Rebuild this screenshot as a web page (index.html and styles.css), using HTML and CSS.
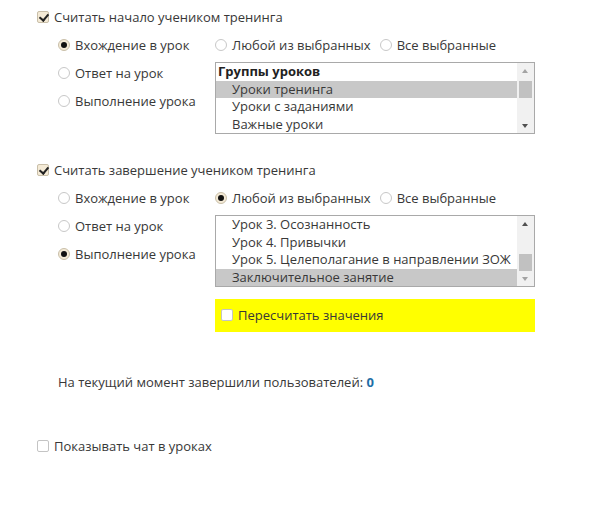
FILE: index.html
```html
<!DOCTYPE html>
<html lang="ru">
<head>
<meta charset="utf-8">
<title>Настройки тренинга</title>
<link rel="stylesheet" href="styles.css">
</head>
<body>
<div class="page">
  <section class="block">
    <label class="check-row"><span class="cb checked"></span>Считать начало учеником тренинга</label>
    <div class="opts">
      <div class="col-left">
        <label class="radio-row"><span class="rb on"></span>Вхождение в урок</label>
        <label class="radio-row"><span class="rb"></span>Ответ на урок</label>
        <label class="radio-row"><span class="rb"></span>Выполнение урока</label>
      </div>
      <div class="col-right">
        <div class="radio-inline">
          <label class="radio-row"><span class="rb"></span>Любой из выбранных</label>
          <label class="radio-row"><span class="rb"></span>Все выбранные</label>
        </div>
        <div class="listbox lb1">
          <div class="lb-items">
            <div class="lb-group">Группы уроков</div>
            <div class="lb-opt sel">Уроки тренинга</div>
            <div class="lb-opt">Уроки с заданиями</div>
            <div class="lb-opt">Важные уроки</div>
          </div>
          <div class="sbar">
            <span class="arr up"></span>
            <div class="track"><div class="thumb t1"></div></div>
            <span class="arr down"></span>
          </div>
        </div>
      </div>
    </div>
  </section>

  <section class="block b2">
    <label class="check-row"><span class="cb checked"></span>Считать завершение учеником тренинга</label>
    <div class="opts">
      <div class="col-left">
        <label class="radio-row"><span class="rb"></span>Вхождение в урок</label>
        <label class="radio-row"><span class="rb"></span>Ответ на урок</label>
        <label class="radio-row"><span class="rb on"></span>Выполнение урока</label>
      </div>
      <div class="col-right">
        <div class="radio-inline">
          <label class="radio-row"><span class="rb on"></span>Любой из выбранных</label>
          <label class="radio-row"><span class="rb"></span>Все выбранные</label>
        </div>
        <div class="listbox lb2">
          <div class="lb-items">
            <div class="lb-opt">Урок 3. Осознанность</div>
            <div class="lb-opt">Урок 4. Привычки</div>
            <div class="lb-opt">Урок 5. Целеполагание в направлении ЗОЖ</div>
            <div class="lb-opt sel">Заключительное занятие</div>
          </div>
          <div class="sbar">
            <span class="arr up dark"></span>
            <div class="track"><div class="thumb t2"></div></div>
            <span class="arr down light"></span>
          </div>
        </div>
        <label class="recalc"><span class="cb"></span>Пересчитать значения</label>
      </div>
    </div>
  </section>

  <p class="counter">На текущий момент завершили пользователей: <b class="num">0</b></p>

  <label class="check-row chat"><span class="cb"></span>Показывать чат в уроках</label>
</div>
</body>
</html>
```

FILE: styles.css
```css
* { box-sizing: border-box; }
html, body { margin: 0; padding: 0; background: #fff; }
body {
  font-family: "Open Sans", "Noto Sans", sans-serif;
  font-size: 13px;
  color: #383838;
}
.page { padding: 7px 0 0 37px; }

.check-row {
  display: flex;
  align-items: center;
  height: 20px;
  gap: 5px;
}
.cb {
  width: 12px; height: 12px;
  border: 1px solid #c4c4c4;
  border-radius: 2px;
  background: #fff;
  position: relative;
  flex: none;
}
.cb.checked { background: #f4ead6; border-color: #c9bfa9; }
.cb.checked::after {
  content: "";
  position: absolute;
  left: 3px; top: 0px;
  width: 4px; height: 7px;
  border: solid #222;
  border-width: 0 2px 2px 0;
  transform: rotate(40deg);
}

.opts {
  display: flex;
  padding-left: 21px;
  margin-top: 4px;
}
.col-left { width: 157px; display: flex; flex-direction: column; }
.col-left .radio-row { height: 28px; }
.radio-row {
  display: flex;
  align-items: center;
  gap: 5px;
}
.rb {
  width: 12px; height: 12px;
  border-radius: 50%;
  border: 1px solid #c8c8c8;
  background: #fff;
  flex: none;
  position: relative;
}
.rb.on { background: #f4ead6; border-color: #c9bfa9; }
.rb.on::after {
  content: "";
  position: absolute;
  left: 2px; top: 2px;
  width: 6px; height: 6px;
  border-radius: 50%;
  background: #111;
}

.col-right { width: 320px; display: flex; flex-direction: column; }
.radio-inline { display: flex; height: 28px; gap: 9px; }

.listbox {
  display: flex;
  border: 1px solid #a9a9a9;
  height: 72px;
  width: 320px;
  margin-top: 3px;
  overflow: hidden;
}
.lb-items { flex: 1; }
.lb-group, .lb-opt { height: 17.5px; line-height: 17.5px; white-space: nowrap; }
.lb-group { font-weight: 700; padding-left: 2px; color: #222; }
.lb-opt { padding-left: 16px; }
.lb-opt.sel { background: #c8c8c8; }

.sbar {
  width: 17px;
  background: #f1f1f1;
  display: flex;
  flex-direction: column;
  align-items: center;
}
.arr { height: 15px; width: 100%; position: relative; flex: none; }
.arr::after {
  content: "";
  position: absolute;
  left: 5px;
  border-left: 3.5px solid transparent;
  border-right: 3.5px solid transparent;
}
.arr.up::after { top: 6px; border-bottom: 4px solid #a3a3a3; }
.arr.down::after { top: 6px; border-top: 4px solid #505050; }
.arr.up.dark::after { border-bottom-color: #505050; }
.arr.down.light::after { border-top-color: #a3a3a3; }
.track { flex: 1; width: 100%; position: relative; }
.thumb { position: absolute; left: 2px; right: 2px; height: 17px; background: #c1c1c1; }
.t1 { top: 3px; }
.t2 { top: 23px; }

.b2 { margin-top: 26px; }
.recalc {
  display: flex;
  align-items: center;
  gap: 5px;
  margin-top: 12px;
  height: 33px;
  background: #ffff00;
  padding-left: 6px;
  padding-bottom: 2px;
}

.counter { margin: 40px 0 0 21px; line-height: 20px; }
.num { color: #1f6ea6; }
.chat { margin-top: 44px; }
```
